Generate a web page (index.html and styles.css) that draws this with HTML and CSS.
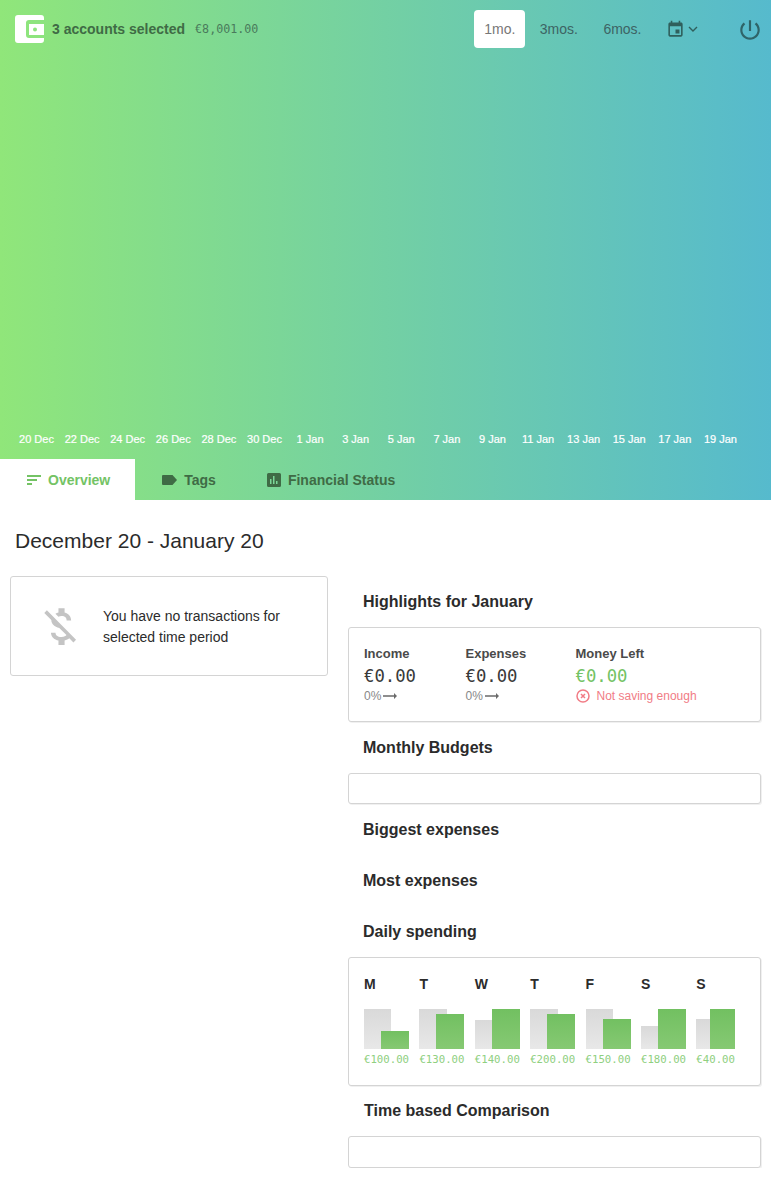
FILE: index.html
```html
<!DOCTYPE html>
<html lang="en">
<head>
    <meta charset="UTF-8">
    <title>Overview</title>
    <link rel="stylesheet" href="styles.css">
</head>
<body>
    <header class="hero">
        <div class="topbar">
            <div class="account">
                <svg class="wallet" width="29" height="28" viewBox="0 0 29 28">
                    <path fill="#fff" d="M3 0h23a3 3 0 0 1 3 3v2H14a3 3 0 0 0-3 3v12a3 3 0 0 0 3 3h15v2a3 3 0 0 1-3 3H3a3 3 0 0 1-3-3V3a3 3 0 0 1 3-3z"/>
                    <path fill="#fff" fill-rule="evenodd" d="M14 9h15v11H14zM20 12.500a2 2 0 1 0 0 4 2 2 0 0 0 0-4z"/>
                </svg>
                <span class="account-name">3 accounts selected</span>
                <span class="account-sum">€8,001.00</span>
            </div>
            <nav class="periods">
                <a class="period active">1mo.</a>
                <a class="period">3mos.</a>
                <a class="period">6mos.</a>
                <a class="period-cal">
                    <svg width="19" height="19" viewBox="0 0 24 24">
                        <path fill="#2f5f5c" d="M17 12h-5v5h5v-5zM16 1v2H8V1H6v2H5c-1.110 0-1.990.9-1.990 2L3 19c0 1.100.89 2 2 2h14c1.100 0 2-.9 2-2V5c0-1.100-.9-2-2-2h-1V1h-2zm3 18H5V8h14v11z"/>
                    </svg>
                    <svg width="10" height="6" viewBox="0 0 10 6">
                        <path fill="none" stroke="#2f5f5c" stroke-width="1.400" d="M1 1l4 4 4-4"/>
                    </svg>
                </a>
            </nav>
            <svg class="power" width="26" height="26" viewBox="0 0 24 24">
                <path fill="#2f6468" d="M13 3h-2v10h2V3zm4.830 2.170l-1.420 1.420C17.990 7.860 19 9.810 19 12c0 3.870-3.130 7-7 7s-7-3.130-7-7c0-2.190 1.010-4.140 2.580-5.420L6.170 5.170C4.230 6.820 3 9.260 3 12c0 4.970 4.030 9 9 9s9-4.030 9-9c0-2.740-1.230-5.180-3.170-6.830z"/>
            </svg>
        </div>
        <div class="axis">
            <span>20 Dec</span><span>22 Dec</span><span>24 Dec</span><span>26 Dec</span>
            <span>28 Dec</span><span>30 Dec</span><span>1 Jan</span><span>3 Jan</span>
            <span>5 Jan</span><span>7 Jan</span><span>9 Jan</span><span>11 Jan</span>
            <span>13 Jan</span><span>15 Jan</span><span>17 Jan</span><span>19 Jan</span>
        </div>
        <div class="tabs">
            <a class="tab active">
                <svg width="14" height="10" viewBox="0 0 14 10">
                    <path fill="#74c365" d="M0 0h14v2H0zM0 4h10v2H0zM0 8h5v2H0z"/>
                </svg>
                Overview
            </a>
            <a class="tab">
                <svg width="15" height="10" viewBox="0 0 15 10">
                    <path fill="#3f6b45" d="M1 0h9.500L15 5l-4.500 5H1a1 1 0 0 1-1-1V1a1 1 0 0 1 1-1z"/>
                </svg>
                Tags
            </a>
            <a class="tab">
                <svg width="14" height="14" viewBox="0 0 14 14">
                    <path fill="#3f6b45" fill-rule="evenodd" d="M1.500 0h11A1.500 1.500 0 0 1 14 1.500v11a1.500 1.500 0 0 1-1.500 1.500h-11A1.500 1.500 0 0 1 0 12.500v-11A1.500 1.500 0 0 1 1.500 0zM3 6v5h1.500V6zm3-3v8h1.500V3zm3 5v3h1.500V8z"/>
                </svg>
                Financial Status
            </a>
        </div>
    </header>

    <h1 class="range">December 20 - January 20</h1>

    <main class="columns">
        <section class="left">
            <div class="card empty">
                <svg class="no-money" width="49" height="49" viewBox="0 0 24 24">
                    <path fill="#c4c4c4" d="M12.500 6.900c1.780 0 2.440.85 2.500 2.100h2.210c-.07-1.720-1.120-3.300-3.210-3.810V3h-3v2.160c-.53.12-1.030.3-1.480.54l1.470 1.470c.41-.17.91-.27 1.510-.27zM5.330 4.060L4.060 5.330 7.500 8.770c0 2.080 1.560 3.220 3.910 3.910l3.510 3.510c-.34.48-1.050.91-2.420.91-2.060 0-2.870-.92-2.980-2.100h-2.200c.12 2.190 1.760 3.420 3.680 3.830V21h3v-2.150c.96-.18 1.730-.55 2.300-1.080l2.040 2.050 1.270-1.270L5.330 4.060z"/>
                </svg>
                <p>You have no transactions for selected time period</p>
            </div>
        </section>

        <section class="right">
            <h2 class="first-title">Highlights for January</h2>
            <div class="card highlights">
                <div class="stat income">
                    <div class="stat-label">Income</div>
                    <div class="stat-value">€0.00</div>
                    <div class="stat-note">0%<svg width="14" height="6" viewBox="0 0 14 6"><path fill="#6a6a6a" d="M0 2.300h11V0l3 3-3 3V3.700H0z"/></svg></div>
                </div>
                <div class="stat expenses">
                    <div class="stat-label">Expenses</div>
                    <div class="stat-value">€0.00</div>
                    <div class="stat-note">0%<svg width="14" height="6" viewBox="0 0 14 6"><path fill="#6a6a6a" d="M0 2.300h11V0l3 3-3 3V3.700H0z"/></svg></div>
                </div>
                <div class="stat">
                    <div class="stat-label">Money Left</div>
                    <div class="stat-value green">€0.00</div>
                    <div class="stat-note warn">
                        <svg width="14" height="14" viewBox="0 0 14 14">
                            <circle cx="7" cy="7" r="6" fill="none" stroke="#f17c86" stroke-width="1.500"/>
                            <path fill="none" stroke="#f17c86" stroke-width="1.500" d="M5 5l4 4M9 5l-4 4"/>
                        </svg>
                        Not saving enough
                    </div>
                </div>
            </div>

            <h2 class="first-title budgets-title">Monthly Budgets</h2>
            <div class="card blank"></div>

            <h2 class="biggest-title">Biggest expenses</h2>
            <h2 class="plain-title">Most expenses</h2>
            <h2 class="daily-title">Daily spending</h2>
            <div class="card daily">
                <div class="day">
                    <b>M</b>
                    <div class="bars"><i class="bar-old" style="width:27px;height:40px"></i><i class="bar-new" style="width:28px;height:18px"></i></div>
                    <span>€100.00</span>
                </div>
                <div class="day">
                    <b>T</b>
                    <div class="bars"><i class="bar-old" style="width:28px;height:40px"></i><i class="bar-new" style="width:28px;height:35px"></i></div>
                    <span>€130.00</span>
                </div>
                <div class="day">
                    <b>W</b>
                    <div class="bars"><i class="bar-old" style="width:17px;height:29px"></i><i class="bar-new" style="width:28px;height:40px"></i></div>
                    <span>€140.00</span>
                </div>
                <div class="day">
                    <b>T</b>
                    <div class="bars"><i class="bar-old" style="width:28px;height:40px"></i><i class="bar-new" style="width:28px;height:35px"></i></div>
                    <span>€200.00</span>
                </div>
                <div class="day">
                    <b>F</b>
                    <div class="bars"><i class="bar-old" style="width:27px;height:40px"></i><i class="bar-new" style="width:28px;height:30px"></i></div>
                    <span>€150.00</span>
                </div>
                <div class="day">
                    <b>S</b>
                    <div class="bars"><i class="bar-old" style="width:18px;height:23px"></i><i class="bar-new" style="width:28px;height:40px"></i></div>
                    <span>€180.00</span>
                </div>
                <div class="day">
                    <b>S</b>
                    <div class="bars"><i class="bar-old" style="width:14px;height:30px"></i><i class="bar-new" style="width:25px;height:40px"></i></div>
                    <span>€40.00</span>
                </div>
            </div>

            <h2 class="compare-title">Time based Comparison</h2>
            <div class="card blank compare"></div>
        </section>
    </main>
</body>
</html>
```

FILE: styles.css
```css
* {
    box-sizing: border-box;
}
body {
    margin: 0;
    font-family: "Liberation Sans", Arial, sans-serif;
    color: #2b2b2b;
    background-color: #fff;
}
.hero {
    height: 500px;
    display: flex;
    flex-direction: column;
    background: linear-gradient(90deg, #90e67a 0%, #56bacd 100%);
}
.topbar {
    display: flex;
    align-items: flex-start;
    height: 48px;
    padding: 10px 8.5px 0 15px;
}
.account {
    display: flex;
    align-items: center;
    height: 38px;
    flex: 1;
}
.wallet {
    margin-top: -1px;
}
.account-name {
    margin-left: 8px;
    font-size: 14px;
    font-weight: bold;
    color: #3f6b45;
}
.account-sum {
    margin-left: 10px;
    font-family: "DejaVu Sans Mono", monospace;
    font-size: 11.7px;
    color: #4a7a5c;
}
.periods {
    display: flex;
    align-items: center;
    height: 38px;
}
.period {
    height: 38px;
    padding: 0 11px;
    margin-right: 3.5px;
    line-height: 38px;
    font-size: 14px;
    color: #3d6464;
    border-radius: 4px;
}
.period.active {
    width: 51px;
    padding: 0;
    text-align: center;
    color: #777;
    background-color: #fff;
}
.period-cal {
    display: flex;
    align-items: center;
    gap: 3px;
    margin: 0 38.5px 0 10px;
}
.power {
    margin-top: 6.5px;
}
.axis {
    display: flex;
    justify-content: space-between;
    margin-top: auto;
    padding: 0 33px 14px 19px;
    font-size: 11px;
    color: #fff;
    -webkit-text-stroke: 0.2px #fff;
}
.axis span {
    width: 35px;
    text-align: center;
    white-space: nowrap;
}
.tabs {
    display: flex;
    height: 41px;
}
.tab {
    display: flex;
    align-items: center;
    gap: 7px;
    padding: 0 24px 0 27px;
    font-size: 14px;
    font-weight: bold;
    color: #3f6b45;
}
.tab.active {
    padding-right: 25px;
    color: #74c365;
    background-color: #fff;
}
.range {
    margin: 29px 0 0 15px;
    font-size: 21px;
    font-weight: normal;
    line-height: 24px;
}
.columns {
    display: flex;
    align-items: flex-start;
    padding: 23px 10px 0;
}
.left {
    flex: none;
    width: 318px;
    margin-right: 20px;
}
.right {
    flex: 1;
    min-width: 0;
}
.card {
    border: 1px solid #d4d4d4;
    border-radius: 3px;
    background-color: #fff;
}
.right .card {
    box-shadow: 1px 1px 0 rgba(0, 0, 0, 0.06);
}
.empty {
    display: flex;
    align-items: center;
    height: 100px;
    padding-left: 25px;
}
.no-money {
    flex: none;
    margin-right: 18px;
}
.empty p {
    margin: 2px 0 0;
    font-size: 14px;
    line-height: 21px;
}
h2 {
    margin: 0;
    padding-left: 15px;
    font-size: 16px;
    line-height: 20px;
}
.first-title {
    margin: 16px 0 15px;
}
.highlights {
    display: flex;
    height: 95px;
    padding: 18px 15px 0;
}
.stat-label {
    font-size: 13px;
    font-weight: bold;
    line-height: 15px;
    color: #4a4a4a;
}
.income {
    width: 101.5px;
}
.expenses {
    width: 110px;
}
.stat-value {
    margin-top: 5px;
    font-family: "DejaVu Sans Mono", monospace;
    font-size: 17.3px;
    line-height: 20px;
    color: #3a3a3a;
}
.stat-value.green {
    color: #74c365;
}
.stat-note {
    display: flex;
    align-items: center;
    gap: 2px;
    margin-top: 2px;
    font-size: 12px;
    line-height: 16px;
    color: #888;
}
.stat-note.warn {
    gap: 7px;
    color: #f17c86;
}
.blank {
    height: 31px;
}
.biggest-title {
    margin: 16px 0 31px;
}
.plain-title {
    margin-bottom: 31px;
}
.daily-title {
    margin-bottom: 15px;
}
.daily {
    display: grid;
    grid-template-columns: repeat(7, 55.4px);
    height: 129px;
    padding: 18px 0 0 15px;
}
.day {
    width: fit-content;
}
.day b {
    display: block;
    font-size: 14px;
    line-height: 16px;
}
.bars {
    display: grid;
    height: 40px;
    margin-top: 17px;
}
.bars i {
    grid-area: 1 / 1;
    align-self: end;
}
.bar-old {
    justify-self: start;
    background: linear-gradient(180deg, #d9d9d9, #e8e8e8);
}
.bar-new {
    justify-self: end;
    background: linear-gradient(180deg, #72c061, #86c973);
}
.day span {
    display: block;
    margin-top: 4px;
    font-family: "DejaVu Sans Mono", monospace;
    font-size: 10.7px;
    line-height: 14px;
    color: #8fd07f;
    white-space: nowrap;
}
.compare-title {
    margin: 15px 0 15px;
    padding-left: 16px;
}
.compare {
    height: 32px;
}
```
